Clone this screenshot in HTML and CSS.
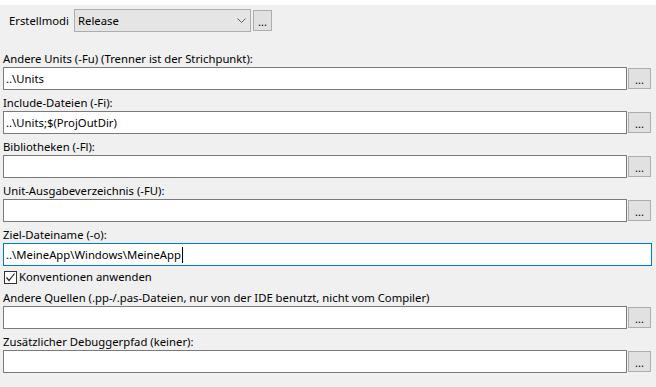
FILE: index.html
```html
<!DOCTYPE html>
<html lang="de">
<head>
<meta charset="utf-8">
<link rel="stylesheet" href="styles.css">
</head>
<body>
<div class="topstrip"></div>
<div class="toolbar">
  <span class="tb-label">Erstellmodi</span>
  <div class="combo">
    <span class="combo-text">Release</span>
    <svg class="combo-arrow" width="9" height="6" viewBox="0 0 9 6"><polyline points="0.5,0.5 4.5,4.5 8.5,0.5" fill="none" stroke="#606060" stroke-width="1"/></svg>
  </div>
  <button class="dots small">...</button>
</div>
<div class="form">
  <div class="field">
    <div class="label">Andere Units (-Fu) (Trenner ist der Strichpunkt):</div>
    <div class="row"><div class="input">..\Units</div><button class="dots">...</button></div>
  </div>
  <div class="field">
    <div class="label">Include-Dateien (-Fi):</div>
    <div class="row"><div class="input">..\Units;$(ProjOutDir)</div><button class="dots">...</button></div>
  </div>
  <div class="field">
    <div class="label">Bibliotheken (-Fl):</div>
    <div class="row"><div class="input"></div><button class="dots">...</button></div>
  </div>
  <div class="field">
    <div class="label">Unit-Ausgabeverzeichnis (-FU):</div>
    <div class="row"><div class="input"></div><button class="dots">...</button></div>
  </div>
  <div class="field">
    <div class="label">Ziel-Dateiname (-o):</div>
    <div class="row"><div class="input focused">..\MeineApp\Windows\MeineApp<span class="caret"></span></div></div>
  </div>
  <div class="checkrow">
    <span class="checkbox"><svg width="11" height="11" viewBox="0 0 11 11"><polyline points="1.5,5.5 4,8.5 9.5,1.5" fill="none" stroke="#222" stroke-width="1.2"/></svg></span>
    <span class="checklabel">Konventionen anwenden</span>
  </div>
  <div class="field">
    <div class="label">Andere Quellen (.pp-/.pas-Dateien, nur von der IDE benutzt, nicht vom Compiler)</div>
    <div class="row"><div class="input"></div><button class="dots">...</button></div>
  </div>
  <div class="field">
    <div class="label">Zusätzlicher Debuggerpfad (keiner):</div>
    <div class="row"><div class="input"></div><button class="dots">...</button></div>
  </div>
</div>
</body>
</html>
```
FILE: styles.css
```css
html, body {
  margin: 0;
  padding: 0;
  background: #f0f0f0;
  font-family: "Noto Sans", "Open Sans", sans-serif;
  font-size: 11.3px;
  color: #000;
  width: 656px;
  height: 387px;
  overflow: hidden;
}
.topstrip {
  height: 5px;
  background: #fff;
}
.toolbar {
  display: flex;
  align-items: center;
  margin-top: 4px;
  padding-left: 9px;
  height: 23px;
}
.tb-label {
  width: 65px;
  line-height: 16px;
}
.combo {
  box-sizing: border-box;
  width: 177px;
  height: 23px;
  border: 1px solid #adadad;
  background: #e5e5e5;
  display: flex;
  align-items: center;
  padding-left: 3px;
  padding-right: 4px;
}
.combo-text {
  flex: 1;
  line-height: 16px;
}
.combo-arrow {
  display: block;
}
.dots {
  box-sizing: border-box;
  width: 23px;
  height: 21px;
  margin: 0 0 0 1px;
  padding: 0 0 3px 0;
  border: 1px solid #adadad;
  background: #e1e1e1;
  font-family: "Noto Sans", sans-serif;
  font-size: 11px;
  line-height: 11px;
  color: #000;
  display: flex;
  align-items: flex-end;
  justify-content: center;
  flex: none;
}
.dots.small {
  width: 19px;
  margin-left: 2px;
}
.form {
  margin-top: 19px;
  padding: 0 4px 0 3px;
}
.field {
  margin-bottom: 5px;
}
.label {
  height: 16px;
  line-height: 15px;
  white-space: nowrap;
}
.row {
  display: flex;
  align-items: center;
  height: 23px;
}
.input {
  box-sizing: border-box;
  flex: 1;
  height: 23px;
  border: 1px solid #7a7a7a;
  background: #fff;
  padding-left: 2px;
  line-height: 20px;
  white-space: nowrap;
  display: flex;
  align-items: center;
}
.input.focused {
  border-color: #0078d7;
}
.caret {
  display: inline-block;
  width: 1px;
  height: 16px;
  background: #000;
  margin-left: 1px;
}
.row .dots {
  margin-left: 1px;
  margin-right: 1px;
}
.checkrow {
  display: flex;
  align-items: flex-start;
  height: 16px;
  margin-bottom: 3px;
  padding-left: 1px;
}
.checkbox {
  box-sizing: border-box;
  width: 13px;
  height: 13px;
  border: 1px solid #333;
  background: #fff;
  display: flex;
  align-items: center;
  justify-content: center;
  margin-right: 2px;
}
.checkbox svg {
  display: block;
}
.checklabel {
  line-height: 14px;
  margin-top: -1px;
}
```
